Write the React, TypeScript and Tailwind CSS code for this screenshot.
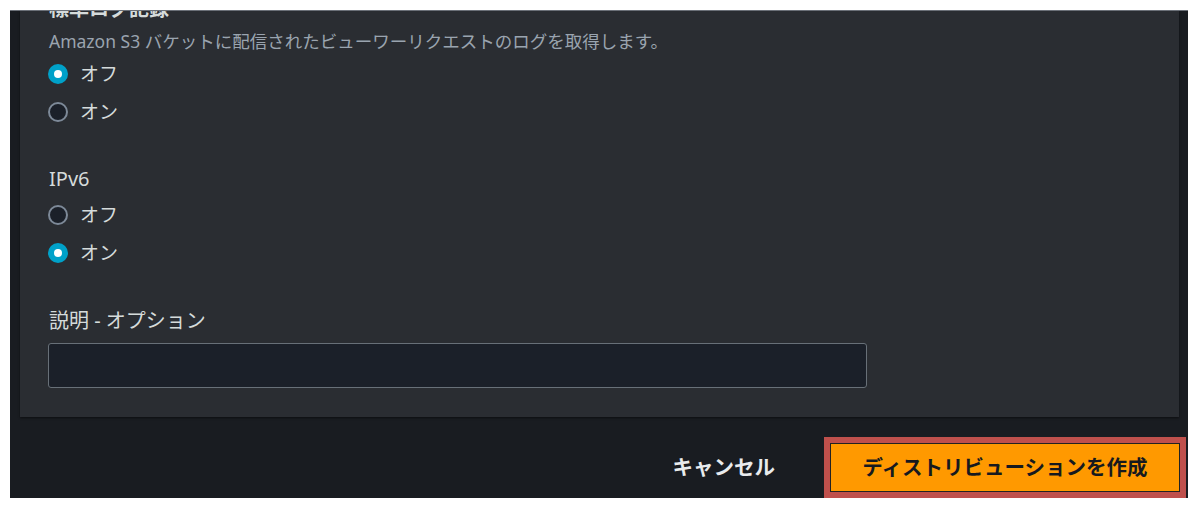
import React from "react";

const font = { fontFamily: '"Noto Sans", "Noto Sans CJK JP", sans-serif' };

function Radio({ checked, label }: { checked: boolean; label: string }) {
  return (
    <div className="flex h-[28px] items-center gap-[12px]">
      {checked ? (
        <span className="flex h-[20px] w-[20px] items-center justify-center rounded-full bg-[#00a1c9]">
          <span className="h-[8px] w-[8px] rounded-full bg-white" />
        </span>
      ) : (
        <span className="box-border h-[20px] w-[20px] rounded-full border-2 border-[#7d8998] bg-[#1b2029]" />
      )}
      <span className="text-[19px] leading-[28px] text-[#d5dbdb]">{label}</span>
    </div>
  );
}

export default function App() {
  return (
    <div className="h-[510px] w-[1200px] bg-white pl-[10px] pt-[10px]" style={font}>
      <div className="flex h-[488px] w-[1178px] flex-col overflow-hidden border-t border-[#6b7078] bg-[#191c21]">
        <div className="ml-[10px] h-[406px] w-[1159px] shrink-0 overflow-hidden bg-[#2a2d32] px-[28px] shadow-[0_1px_2px_rgba(0,0,0,0.5)]">
          <div className="mt-[-14px] flex flex-col">
            <div className="pl-[1px] text-[20px] font-bold leading-[24px] text-[#d5dbdb]">標準ログ記録</div>
            <div className="mt-[9px] pl-[1px] text-[17.5px] leading-[22px] text-[#9aa4af]">
              Amazon S3 バケットに配信されたビューワーリクエストのログを取得します。
            </div>
            <div className="mt-[8px] flex flex-col gap-[10px]">
              <Radio checked label="オフ" />
              <Radio checked={false} label="オン" />
            </div>
            <div className="mt-[41px] pl-[1px] text-[20px] font-normal leading-[24px] text-[#d5dbdb]">IPv6</div>
            <div className="mt-[10px] flex flex-col gap-[10px]">
              <Radio checked={false} label="オフ" />
              <Radio checked label="オン" />
            </div>
            <div className="mt-[42px] pl-[1px] text-[20px] font-normal leading-[24px] text-[#d5dbdb]">説明 - オプション</div>
            <div className="mt-[10px] h-[45px] w-[819px] rounded-[3px] border border-[#687078] bg-[#1b2029]" />
          </div>
        </div>
        <div className="flex flex-1 items-end justify-end pr-[2px]">
          <div className="flex h-[61px] items-center">
            <span className="mr-[49px] text-[20.5px] font-bold text-[#e9ebed]">キャンセル</span>
            <div className="border-[6px] border-[#bf504c]">
              <div className="flex h-[49px] w-[350px] items-center justify-center border border-[#222] bg-[#ff9900] text-[20.5px] font-bold text-[#16191f]">
                ディストリビューションを作成
              </div>
            </div>
          </div>
        </div>
      </div>
    </div>
  );
}
